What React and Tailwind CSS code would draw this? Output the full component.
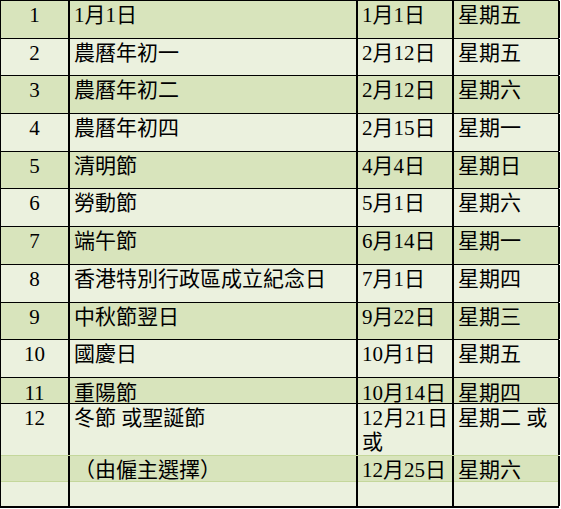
import React from "react";

const DARK = "bg-[#d8e4bc]";
const LIGHT = "bg-[#ebf1de]";

const rows = [
  ["1", "1月1日", "1月1日", "星期五"],
  ["2", "農曆年初一", "2月12日", "星期五"],
  ["3", "農曆年初二", "2月12日", "星期六"],
  ["4", "農曆年初四", "2月15日", "星期一"],
  ["5", "清明節", "4月4日", "星期日"],
  ["6", "勞動節", "5月1日", "星期六"],
  ["7", "端午節", "6月14日", "星期一"],
  ["8", "香港特別行政區成立紀念日", "7月1日", "星期四"],
  ["9", "中秋節翌日", "9月22日", "星期三"],
  ["10", "國慶日", "10月1日", "星期五"],
];

function Cell({ children, className = "" }) {
  return (
    <div className={"pl-[4px] pr-[4px] border-r-2 border-black " + className}>
      {children}
    </div>
  );
}

function Row({ cells, bg, h, border, pt }) {
  return (
    <div
      className={
        "grid grid-cols-[69px_288px_96px_106px] " + bg + " " + h + " " + border
      }
    >
      <Cell className={"text-center " + pt}>{cells[0]}</Cell>
      <Cell className={pt}>{cells[1]}</Cell>
      <Cell className={pt}>{cells[2]}</Cell>
      <Cell className={pt}>{cells[3]}</Cell>
    </div>
  );
}

export default function App() {
  return (
    <div className="w-[561px] h-[509px] bg-white">
      <div
        className="w-[559px] border-l border-t border-black text-black text-[21px] leading-[24px]"
        style={{ fontFamily: '"Liberation Serif", "Noto Sans CJK TC", serif' }}
      >
        {rows.map((r, i) => (
          <Row
            key={i}
            cells={r}
            bg={i % 2 === 0 ? DARK : LIGHT}
            h="h-[37.7px]"
            border="border-b border-black"
            pt="pt-[2px]"
          />
        ))}
        <Row
          cells={["11", "重陽節", "10月14日", "星期四"]}
          bg={DARK}
          h="h-[26px]"
          border="border-b border-black"
          pt="pt-[3px]"
        />
        <div className={"grid grid-cols-[69px_288px_96px_106px] h-[52px] border-b border-[#c4d79b] " + LIGHT}>
          <Cell className="text-center pt-[2px]">12</Cell>
          <Cell className="pt-[2px]">冬節 或聖誕節</Cell>
          <Cell className="pt-[2px] text-justify">12月21日 或</Cell>
          <Cell className="pt-[2px]">星期二 或</Cell>
        </div>
        <div className={"grid grid-cols-[69px_288px_96px_106px] h-[26px] border-b border-[#c4d79b] " + DARK}>
          <Cell className="pt-[2px]"></Cell>
          <Cell className="pt-[2px]">（由僱主選擇）</Cell>
          <Cell className="pt-[2px]">12月25日</Cell>
          <Cell className="pt-[2px]">星期六</Cell>
        </div>
        <div className={"grid grid-cols-[69px_288px_96px_106px] h-[26px] border-b-2 border-black " + LIGHT}>
          <Cell></Cell>
          <Cell></Cell>
          <Cell></Cell>
          <Cell></Cell>
        </div>
      </div>
    </div>
  );
}
